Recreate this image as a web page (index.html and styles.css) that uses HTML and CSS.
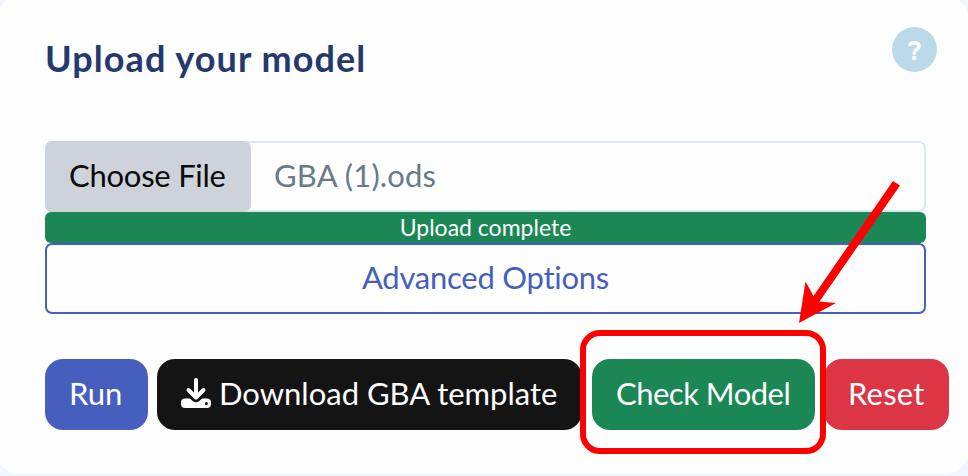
FILE: index.html
```
<!DOCTYPE html>
<html lang="en">
<head>
<meta charset="utf-8">
<title>Upload your model</title>
<link rel="stylesheet" href="styles.css">
</head>
<body>
<main class="card">
  <header class="head">
    <h1 class="title">Upload your model</h1>
    <span class="help"><svg width="45" height="45" viewBox="0 0 45 45" fill="none" stroke="#fff" stroke-width="3.6" stroke-linecap="round" stroke-linejoin="round"><path d="M18 17.2C21 15 27 15.2 27 19.2C27 22.8 22.3 22.2 22.3 26.2"/><path d="M22.2 31V31.1" stroke-width="4.4"/></svg></span>
  </header>
  <div class="file">
    <span class="choose"><span class="t-choose">Choose File</span></span>
    <span class="name"><span class="t-name">GBA (1).ods</span></span>
  </div>
  <div class="progress"><span class="t-progress">Upload complete</span></div>
  <div class="advanced"><span class="t-advanced">Advanced Options</span></div>
  <div class="actions">
    <button class="btn run"><span class="t-run">Run</span></button>
    <button class="btn download"><svg class="icon" width="30" height="30" viewBox="0 0 30 30"><path d="M15 2V19M7.5 12L15 19.5L22.5 12" fill="none" stroke="#fff" stroke-width="4" stroke-linecap="round" stroke-linejoin="round"/><path fill="#fff" fill-rule="evenodd" d="M4 20.5H8.8L12 23.2Q15 25.2 18 23.2L21.2 20.5H26Q30 20.5 30 24.5V26Q30 30 26 30H4Q0 30 0 26V24.5Q0 20.5 4 20.5ZM25.4 23.9A1.5 1.5 0 1 0 25.4 26.9A1.5 1.5 0 1 0 25.4 23.9Z"/></svg><span class="t-download">Download GBA template</span></button>
    <button class="btn check"><span class="t-check">Check Model</span></button>
    <button class="btn reset"><span class="t-reset">Reset</span></button>
  </div>
</main>
<svg class="callout" width="968" height="476" viewBox="0 0 968 476">
  <rect x="583" y="333" width="240" height="118" rx="17" fill="none" stroke="#f00" stroke-width="6"/>
  <path d="M893 181L900 185.5L819.5 301.5L836 303L799 323L805.5 281.5L813.5 296Z" fill="#f00"/>
</svg>
</body>
</html>
```
FILE: styles.css
```
* { box-sizing: border-box; }
body {
  margin: 0;
  height: 476px;
  overflow: hidden;
  background: #f0f5ff;
  font-family: Lato, "Open Sans", sans-serif;
  font-size: 31px;
  font-variant-ligatures: none;
}
.card {
  width: 973px;
  height: 478px;
  margin: -4px 0 0 -4px;
  padding: 31px 0 0 49px;
  border-radius: 24px;
  background: #fefefe;
}
.head {
  display: flex;
  justify-content: space-between;
  width: 892px;
  height: 114px;
}
.title {
  margin: 11px 0 0;
  color: #25396f;
  font-size: 36px;
  line-height: 40px;
  font-weight: 700;
  letter-spacing: 1.08px;
  white-space: nowrap;
}
.help {
  width: 45px;
  height: 45px;
  border-radius: 50%;
  background: #badaea;
}
.help svg { display: block; }
.file {
  display: flex;
  width: 881px;
  height: 71px;
  border: 2px solid #dce7f3;
  border-radius: 7px;
  line-height: 65px;
  white-space: nowrap;
}
.choose {
  width: 206px;
  margin: -2px 0 -2px -2px;
  padding: 2px 0 0 24px;
  border-radius: 7px;
  background: #ced3db;
  color: #0b0b0b;
}
.name { padding-left: 23px; color: #687a89; }
.progress {
  width: 881px;
  height: 31px;
  border-radius: 6px;
  background: #1a8754;
  color: #fff;
  font-size: 23px;
  line-height: 31px;
  text-align: center;
}
.advanced {
  width: 881px;
  height: 71px;
  border: 2px solid #465fbe;
  border-radius: 7px;
  color: #465fbe;
  line-height: 64px;
  text-align: center;
}
.actions { display: flex; margin-top: 45px; }
.btn {
  display: flex;
  align-items: center;
  height: 71px;
  margin: 0;
  padding: 0 0 4px 24px;
  border: 0;
  border-radius: 18px;
  color: #fff;
  font: inherit;
  font-variant-ligatures: none;
  white-space: nowrap;
}
.run { width: 103px; background: #465fbe; }
.download { width: 425px; margin-left: 9px; background: #141414; }
.check { width: 223px; margin-left: 10px; background: #1a8754; }
.reset { width: 125px; margin-left: 9px; background: #dc3546; }
.icon { margin-right: 8px; }
.t-choose { letter-spacing: -0.25px; }
.t-name { letter-spacing: 0.15px; }
.t-advanced { letter-spacing: -0.25px; }
.t-check { letter-spacing: -0.5px; }
.t-reset { letter-spacing: 0.2px; }
.callout { position: absolute; left: 0; top: 0; }
```
